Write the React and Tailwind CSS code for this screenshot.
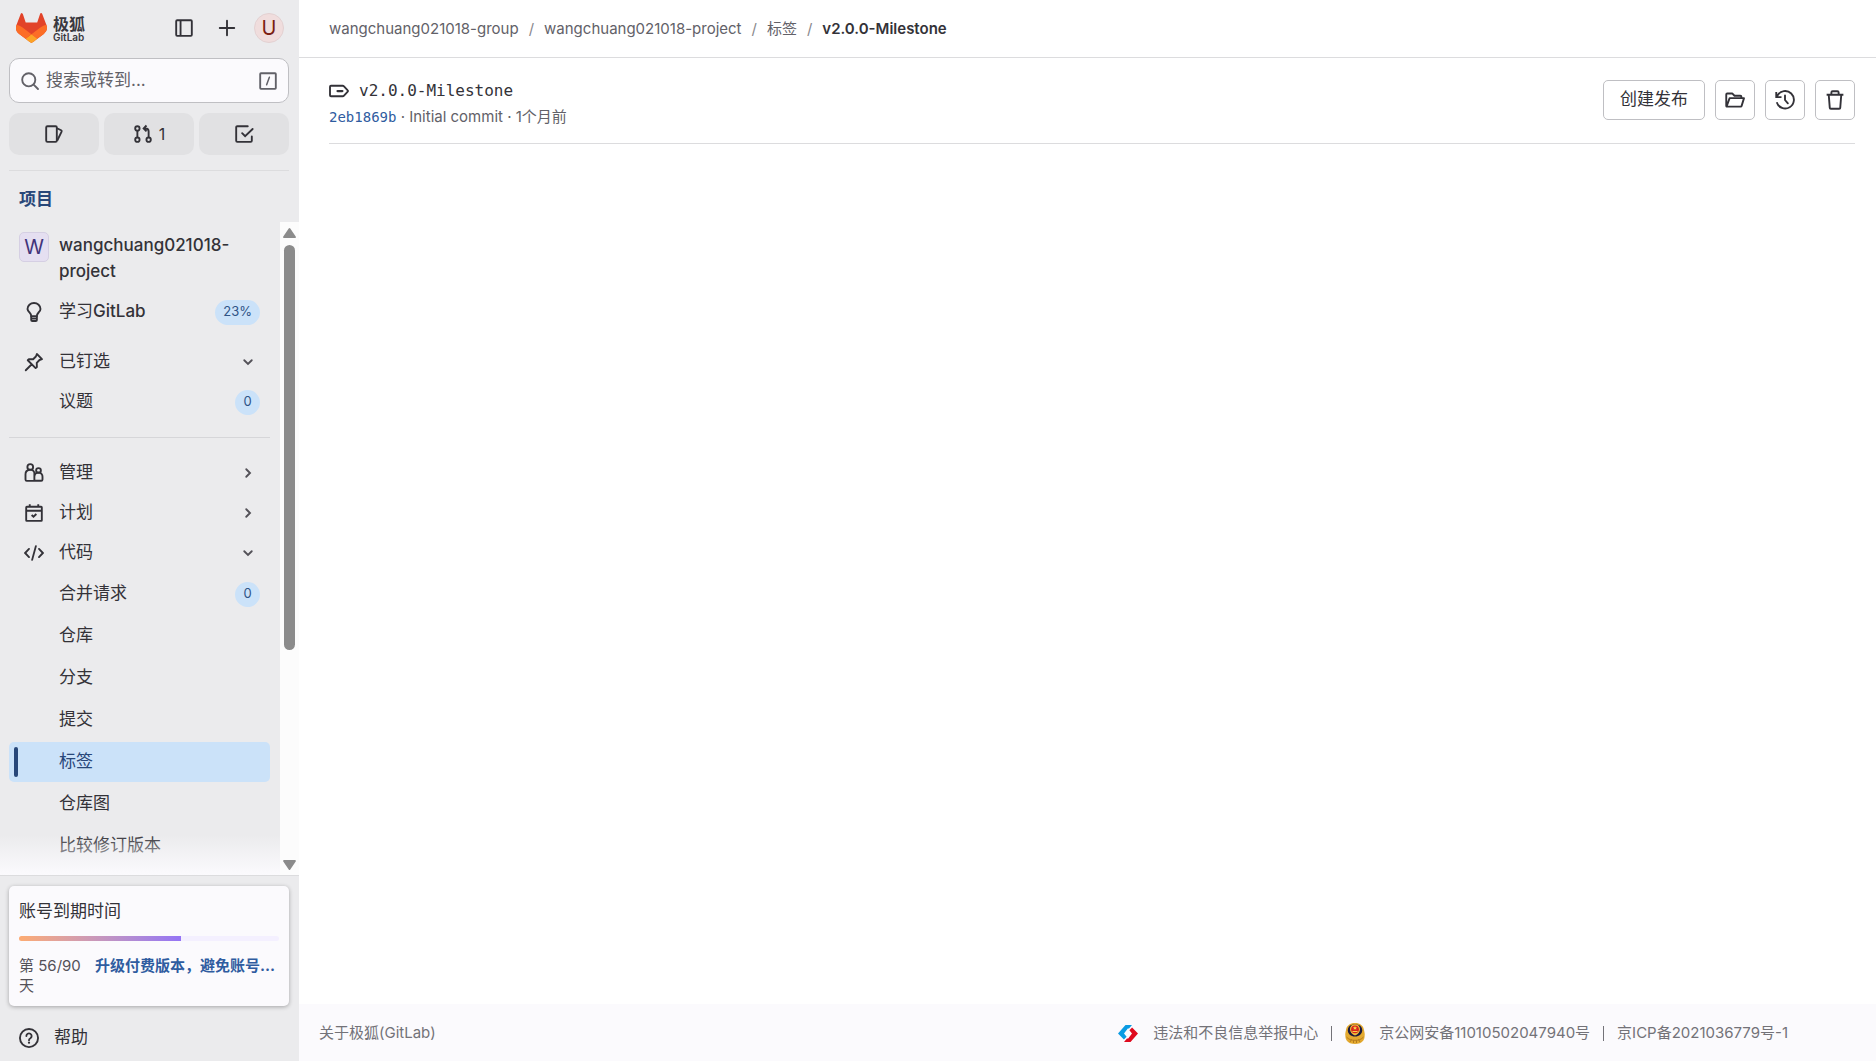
import React from "react";

function Icon({ children, size = "size-5" }) {
  return (
    <svg viewBox="0 0 16 16" className={`${size} shrink-0`} fill="none" stroke="currentColor" strokeWidth="1.5" aria-hidden="true">
      {children}
    </svg>
  );
}

const Chevron = ({ open }) => (
  <Icon>
    {open ? <path d="m5 6.600 3 3 3-3" strokeLinecap="round" /> : <path d="m6.600 5 3 3-3 3" strokeLinecap="round" />}
  </Icon>
);

const SidebarIcon = () => (
  <Icon>
    <rect x="1.75" y="1.75" width="12.5" height="12.5" rx="0.8" />
    <path d="M5.25 2v12" />
  </Icon>
);
const PlusIcon = () => (
  <Icon>
    <path d="M8 2.2v11.6M2.2 8h11.6" strokeLinecap="round" />
  </Icon>
);
const SearchIcon = () => (
  <Icon>
    <circle cx="7" cy="7" r="5.25" />
    <path d="m10.9 10.9 3.5 3.5" strokeLinecap="round" />
  </Icon>
);
const SlashIcon = () => (
  <Icon>
    <rect x="1.75" y="1.75" width="12.5" height="12.5" rx="0.6" />
    <path d="m9.1 5-2.200 6" strokeWidth="1.2" strokeLinecap="round" />
  </Icon>
);
const IssuesIcon = () => (
  <Icon>
    <rect x="1.75" y="1.75" width="8.5" height="12.5" rx="1" />
    <path d="m10.400 3.400 3.300 1.600a.9.9 0 0 1 .4 1.100l-3.600 7.300" strokeLinejoin="round" />
  </Icon>
);
const MergeIcon = () => (
  <Icon>
    <circle cx="3.500" cy="3.500" r="1.75" />
    <circle cx="3.500" cy="12.500" r="1.75" />
    <circle cx="12.500" cy="12.500" r="1.75" />
    <path d="M3.500 5.200v5.600M12.500 10.800V6a2.400 2.400 0 0 0-2.400-2.400H9M10.800 1.200 8.500 3.600l2.300 2.300" />
  </Icon>
);
const TodoIcon = () => (
  <Icon>
    <path d="M11 1.75H2.600a.85.85 0 0 0-.85.85v10.800c0 .47.38.85.85.85h10.800c.47 0 .85-.38.85-.85V10" strokeLinecap="round" />
    <path d="m6.500 7.300 2.400 2.500 6-5.800" strokeLinecap="round" />
  </Icon>
);
const BulbIcon = () => (
  <Icon>
    <path d="M5.750 11.250c0-1.300-.6-2.100-1.500-3.100A4.200 4.200 0 0 1 2.800 5.600C2.800 2.900 5.100.8 8 .8s5.200 2.100 5.200 4.800c0 1-.5 1.800-1.400 2.600-.9 1-1.500 1.800-1.500 3.050Z" strokeLinejoin="round" />
    <path d="M5.750 11.250V14.300c0 .5.400.9.900.9h2.750c.5 0 .9-.4.900-.9v-3.050M5.750 13.200h4.500" />
  </Icon>
);
const PinIcon = () => (
  <Icon>
    <path d="m10.300 1.600 4.100 4.100-2 .7-2.200 2.300.1 3.300-1 .9-6.300-6.300.9-.9 3.400.1 2.200-2.200ZM6 10l-4.600 4.600" strokeLinejoin="round" strokeLinecap="round" />
  </Icon>
);
const UsersIcon = () => (
  <Icon>
    <circle cx="5" cy="3.200" r="2.300" />
    <path d="M8.300 14.250H2.200a1 1 0 0 1-1-1V9a3.700 3.700 0 0 1 7.100-1.400V14.200h5.500a1 1 0 0 0 1-1V11a3.200 3.200 0 0 0-6.400-.4" />
    <circle cx="11.600" cy="6" r="1.900" />
  </Icon>
);
const CalendarIcon = () => (
  <Icon>
    <rect x="1.75" y="3" width="12.500" height="11.250" rx="0.500" />
    <path d="M1.75 6.200h12.500M4.600 1v2M11.400 1v2" />
    <path d="m6.100 9.600 1.500 1.400 2.300-2.200" />
  </Icon>
);
const CodeIcon = () => (
  <Icon>
    <path d="M4 4.700.9 8 4 11.300M12 4.700 15.100 8 12 11.300M9.500 2.500l-3 11" strokeLinecap="round" />
  </Icon>
);
const HelpIcon = () => (
  <Icon>
    <circle cx="8" cy="8" r="7.250" />
    <path d="M5.900 6.400a2.100 2.100 0 1 1 3.200 1.800c-.7.400-1.100.7-1.100 1.500" strokeLinecap="round" />
    <circle cx="8" cy="11.700" r="0.900" fill="currentColor" stroke="none" />
  </Icon>
);
const TagIcon = () => (
  <Icon>
    <path d="M1.600 3.750h9.300c.4 0 .8.200 1.100.5L14.800 7.300a1 1 0 0 1 0 1.400l-2.800 3a1.500 1.500 0 0 1-1.100.5H1.600a.8.800 0 0 1-.8-.8V4.600c0-.5.300-.85.800-.85Z" />
    <path d="M6.800 8h3.900" strokeWidth="1.800" strokeLinecap="round" />
  </Icon>
);
const FolderIcon = () => (
  <Icon>
    <path d="M1 13.250V3.500c0-.4.300-.75.750-.75h4L7.600 4.600h4.700c.5 0 .8.300.8.800v1M1.200 13.250 3.700 6.500h11.500l-1.900 6.200a.8.800 0 0 1-.8.550H1.200Z" strokeLinejoin="round" />
  </Icon>
);
const HistoryIcon = () => (
  <Icon>
    <path d="M1.400 9.800A7 7 0 1 0 2 4.400L1.300 5.400M1 1.600v4.100h4.200" />
    <path d="M8 4.300V8l2.300 2.700" strokeLinecap="round" />
  </Icon>
);
const TrashIcon = () => (
  <Icon>
    <path d="M1.300 3.750h13.400M5.100 3.700V2c0-.6.400-1 1-1h3.800c.6 0 1 .4 1 1v1.700M3 3.900l.8 10.200c0 .5.400.9.900.9h6.600c.5 0 .9-.4.900-.9L13 3.900" />
  </Icon>
);

function Tanuki() {
  return (
    <svg viewBox="0 0 25 24" className="h-[30px] w-[31px]" aria-hidden="true">
      <path fill="#E24329" d="m24.507 9.5-.034-.09L21.082.562a.896.896 0 0 0-1.694.091l-2.29 7.01H7.825L5.535.653a.898.898 0 0 0-1.694-.09L.451 9.411.416 9.5a6.297 6.297 0 0 0 2.09 7.278l.012.01.03.022 5.16 3.867 2.56 1.935 1.554 1.176a1.051 1.051 0 0 0 1.268 0l1.555-1.176 2.56-1.935 5.197-3.89.014-.01A6.297 6.297 0 0 0 24.507 9.5Z" />
      <path fill="#FC6D26" d="m24.507 9.5-.034-.09a11.44 11.44 0 0 0-4.56 2.051l-7.447 5.632 4.742 3.584 5.197-3.89.014-.01A6.297 6.297 0 0 0 24.507 9.5Z" />
      <path fill="#FCA326" d="m7.707 20.677 2.56 1.935 1.555 1.176a1.051 1.051 0 0 0 1.268 0l1.555-1.176 2.56-1.935-4.743-3.584-4.755 3.584Z" />
      <path fill="#FC6D26" d="M5.01 11.461a11.43 11.43 0 0 0-4.56-2.05L.416 9.5a6.297 6.297 0 0 0 2.09 7.278l.012.01.03.022 5.16 3.867 4.745-3.584-7.444-5.632Z" />
    </svg>
  );
}

function ReportLogo() {
  return (
    <svg viewBox="0 0 20 17" className="h-[17px] w-5" aria-hidden="true">
      <path fill="#0a9be3" d="M7.500 0h6.500l-3 3.600H9.800L6 8.500l2.600 3.200-2.700 2.900L0 8.500Z" />
      <path fill="#df0a1e" d="M12.500 17H6l3-3.600h1.200L14 8.500l-2.600-3.200 2.700-2.900L20 8.500Z" />
    </svg>
  );
}

function PoliceBadge() {
  return (
    <svg viewBox="0 0 20 21" className="h-[21px] w-5" aria-hidden="true">
      <path fill="#e3a92f" d="M10 0c5 0 8.500 2.700 9 7 .5 2.500 1 4 .6 6 .3 3-1.600 6-4.600 7.200-3.300 1-6.700 1-10 0C2 19 .1 16 .4 13 0 11 .5 9.500 1 7c.5-4.300 4-7 9-7Z" />
      <path fill="#1d1a3c" d="M10 1.300c4.300 0 7.200 2.300 7.200 5.900 0 3.700-2.900 6.300-7.200 6.300S2.800 10.900 2.800 7.200C2.800 3.600 5.700 1.300 10 1.300Z" />
      <path fill="#f3bd3c" d="M10 1.300c3.200 0 5 2 5 5S13 11.500 10 12.500C7 11.500 5 9.300 5 6.300s1.800-5 5-5Z" />
      <circle cx="10" cy="6.300" r="3.900" fill="#d8261c" />
      <path fill="#f7d34a" d="m10 3 .6 1.300 1.400.1-1 1 .3 1.400L10 6l-1.300.8.3-1.400-1-1 1.400-.1ZM7.500 8h5v1h-5z" />
      <path d="M1.500 14c2 2.500 5 3.300 8.500 3.300s6.500-.8 8.500-3.300M5 19l1.500-2.500M15 19l-1.500-2.500M8.500 20v-2.500M11.500 20v-2.500" stroke="#a8701a" strokeWidth="0.800" fill="none" />
    </svg>
  );
}

const Badge = ({ children }) => (
  <span className="flex h-[25px] min-w-[25px] items-center justify-center rounded-full bg-[#cbe2f9] px-2 text-[13px] text-[#2f5487]">
    {children}
  </span>
);

function NavSection({ icon, label, open }) {
  return (
    <button className="flex h-10 w-full items-center gap-[15px] pr-3 pl-[15px] text-left">
      {icon}
      <span className="grow">{label}</span>
      <span className="text-[#535158]">
        <Chevron open={open} />
      </span>
    </button>
  );
}

function NavLink({ label, badge, active }) {
  if (active) {
    return (
      <a href="#" aria-current="page" className="flex h-10 items-center gap-[41px] rounded-[5px] bg-[#cbe2f9] px-[5px] text-[#284779]">
        <span className="h-[30px] w-1 rounded-full bg-[#284779]" />
        {label}
      </a>
    );
  }
  return (
    <a href="#" className="flex h-10 items-center justify-between pr-2.5 pl-[50px]">
      {label}
      {badge !== undefined && <Badge>{badge}</Badge>}
    </a>
  );
}

function Sidebar() {
  const quick = "flex h-[42px] flex-1 items-center justify-center gap-1.5 rounded-[10px] bg-[#e1e1e3]";
  return (
    <aside className="flex w-[299px] shrink-0 flex-col bg-[#ebebed] text-[17px] text-[#333238]">
      <div className="flex h-14 items-center pr-[15px] pl-4">
        <a href="#" className="flex items-center gap-1.5" aria-label="极狐 GitLab">
          <Tanuki />
          <span className="flex flex-col pt-0.5 font-bold text-[#3a383f]">
            <span className="text-base leading-4">极狐</span>
            <span className="text-[10px] leading-[10px] font-semibold">GitLab</span>
          </span>
        </a>
        <button className="ml-auto" aria-label="侧边栏"><SidebarIcon /></button>
        <button className="ml-[23px]" aria-label="新建"><PlusIcon /></button>
        <button className="ml-[17px] flex size-[30px] items-center justify-center rounded-full border border-[#e3d1d2] bg-[#f0dddd] text-xl leading-none text-[#7b1d12]">
          U
        </button>
      </div>
      <div className="pt-0.5 pr-2.5 pl-[9px]">
        <button className="flex h-[45px] w-full items-center rounded-[10px] border border-[#bfbfc3] bg-[#fbfafd] px-2.5 text-[#626168]">
          <SearchIcon />
          <span className="ml-1.5 grow text-left">搜索或转到...</span>
          <SlashIcon />
        </button>
        <div className="mt-2.5 flex gap-[5px] border-b border-[#dcdcde] pb-[15px]">
          <button className={quick} aria-label="议题"><IssuesIcon /></button>
          <button className={quick}>
            <MergeIcon />
            <span className="text-base">1</span>
          </button>
          <button className={quick} aria-label="待办事项"><TodoIcon /></button>
        </div>
      </div>
      <h2 className="flex h-[51px] items-center px-[19px] pt-1.5 font-bold text-[#284779]">项目</h2>

      <div className="relative flex min-h-0 grow border-b border-[#dcdcde]">
        <nav className="min-w-0 grow overflow-hidden pr-2.5 pl-[9px]" aria-label="项目导航">
          <a href="#" className="flex items-start gap-2.5 px-2.5 pt-2.5">
            <span className="flex size-[30px] items-center justify-center rounded-[5px] border border-[#d5cfe3] bg-[#e5dff1] text-xl leading-none text-[#41337a]">
              W
            </span>
            <span className="leading-[26px] font-medium">
              wangchuang021018-
              <br />
              project
            </span>
          </a>
          <a href="#" className="mt-2 flex h-10 items-center gap-[15px] pr-2.5 pl-[15px]">
            <BulbIcon />
            <span className="grow">学习<span className="font-medium">GitLab</span></span>
            <Badge>23%</Badge>
          </a>
          <div className="mt-2.5 border-b border-[#d6d6d9] pb-[15px]">
            <NavSection icon={<PinIcon />} label="已钉选" open />
            <NavLink label="议题" badge={0} />
          </div>
          <div className="mt-[15px]">
            <NavSection icon={<UsersIcon />} label="管理" />
            <NavSection icon={<CalendarIcon />} label="计划" />
            <NavSection icon={<CodeIcon />} label="代码" open />
            <div className="flex flex-col gap-0.5 pt-px">
              <NavLink label="合并请求" badge={0} />
              <NavLink label="仓库" />
              <NavLink label="分支" />
              <NavLink label="提交" />
              <NavLink label="标签" active />
              <NavLink label="仓库图" />
              <NavLink label="比较修订版本" />
            </div>
          </div>
        </nav>
        <div className="flex w-[19px] shrink-0 flex-col items-center bg-[#fcfcfc] pt-1.5 pb-[5px] text-[#8b8b8b]">
          <svg viewBox="0 0 13 10" className="h-2.5 w-[13px]" aria-hidden="true">
            <path fill="currentColor" d="M5.700.600a1 1 0 0 1 1.600 0L12.700 8.400A1 1 0 0 1 12 10H1A1 1 0 0 1 .3 8.400Z" />
          </svg>
          <div className="my-[7px] flex w-[11px] grow flex-col">
            <div className="h-2/3 rounded-full bg-[#8b8b8b]" />
          </div>
          <svg viewBox="0 0 13 10" className="h-2.5 w-[13px]" aria-hidden="true">
            <path fill="currentColor" d="M5.700 9.400a1 1 0 0 0 1.600 0L12.700 1.600A1 1 0 0 0 12 0H1A1 1 0 0 0 .3 1.600Z" />
          </svg>
        </div>
        <div className="pointer-events-none absolute right-[19px] bottom-0 left-0 h-10 bg-linear-to-b from-transparent to-[#fbfafd]" />
      </div>

      <div className="pt-2.5 pr-2.5 pl-[9px]">
        <section className="rounded-[5px] bg-[#fbfafd] p-2.5 shadow-[0_1px_4px_rgba(0,0,0,0.3)]">
          <h3 className="leading-[30px]">账号到期时间</h3>
          <div className="mt-2.5 h-[5px] overflow-hidden rounded-full bg-[#f4f0ff]" role="progressbar" aria-label="账号到期时间" aria-valuenow={56} aria-valuemax={90}>
            <div className="h-full bg-linear-to-r from-[#fdab71] to-[#9574f5]" style={{ width: `${(56 / 90) * 100}%` }} />
          </div>
          <div className="mt-[15px] flex gap-[14px] text-[15px] leading-5">
            <span className="w-[62px] shrink-0 text-[#535158]">第 56/90 天</span>
            <a href="#" className="font-bold whitespace-nowrap text-[#2f5ca0]">升级付费版本，避免账号...</a>
          </div>
        </section>
        <button className="mt-3 mb-[3px] flex h-10 items-center gap-[15px] px-2.5">
          <HelpIcon />
          帮助
        </button>
      </div>
    </aside>
  );
}

function Breadcrumbs() {
  const items = ["wangchuang021018-group", "wangchuang021018-project", "标签"];
  return (
    <nav aria-label="面包屑" className="flex h-[58px] shrink-0 items-center border-b border-[#dcdcde] pt-0.5 pl-[30px] text-[15px] text-[#626168]">
      {items.map((item) => (
        <React.Fragment key={item}>
          <a href="#">{item}</a>
          <span className="px-2.5 text-[#89888d]">/</span>
        </React.Fragment>
      ))}
      <a href="#" aria-current="page" className="font-semibold text-[#333238]">v2.0.0-Milestone</a>
    </nav>
  );
}

export default function App() {
  const iconButton = "flex size-10 items-center justify-center rounded-[5px] border border-[#bfbfc3] bg-white";
  return (
    <div className="flex h-screen bg-white font-['Inter','Noto_Sans_CJK_SC',sans-serif]">
      <Sidebar />
      <div className="flex min-w-0 grow flex-col">
        <Breadcrumbs />
        <main className="grow pr-[21px] pl-[30px] text-[#333238]">
          <div className="flex items-start justify-between border-b border-[#dcdcde] pt-[22px] pb-4">
            <div>
              <div className="flex h-[22px] items-center gap-2.5">
                <TagIcon />
                <h1 className="font-['DejaVu_Sans_Mono',monospace] text-base">v2.0.0-Milestone</h1>
              </div>
              <p className="mt-[5px] text-[15px] leading-5 text-[#626168]">
                <a href="#" className="font-['DejaVu_Sans_Mono',monospace] text-sm leading-5 text-[#2f5ca0]">2eb1869b</a> · Initial commit · 1个月前
              </p>
            </div>
            <div className="flex gap-2.5 text-[17px]">
              <button className="h-10 rounded-[5px] border border-[#bfbfc3] px-4">创建发布</button>
              <button className={iconButton} aria-label="浏览文件"><FolderIcon /></button>
              <button className={iconButton} aria-label="浏览提交"><HistoryIcon /></button>
              <button className={iconButton} aria-label="删除标签"><TrashIcon /></button>
            </div>
          </div>
        </main>
        <footer className="flex h-[57px] shrink-0 items-center justify-between bg-[#fbfafd] pt-0.5 pr-[88px] pl-5 text-[15px] text-[#737278]">
          <a href="#">关于极狐(GitLab)</a>
          <div className="flex items-center">
            <ReportLogo />
            <a href="#" className="ml-[15px]">违法和不良信息举报中心</a>
            <span className="mx-[13px] h-[15px] w-px bg-[#737278]" />
            <PoliceBadge />
            <a href="#" className="ml-[14px]">京公网安备11010502047940号</a>
            <span className="mx-[13px] h-[15px] w-px bg-[#737278]" />
            <a href="#">京ICP备2021036779号-1</a>
          </div>
        </footer>
      </div>
    </div>
  );
}
